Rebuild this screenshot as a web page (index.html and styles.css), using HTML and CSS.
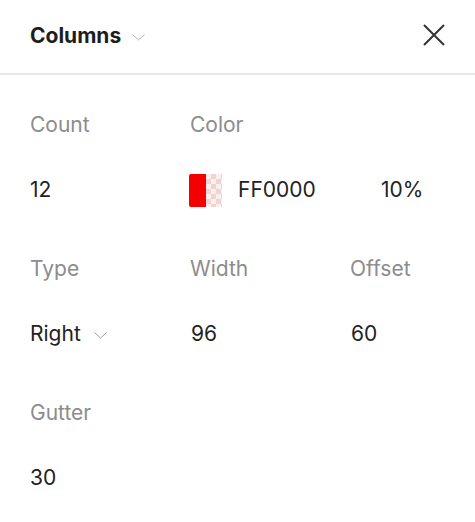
FILE: index.html
```html
<!DOCTYPE html>
<html>
<head>
<meta charset="utf-8">
<link rel="stylesheet" href="styles.css">
</head>
<body>
<div class="panel">
  <div class="header">
    <div class="title">Columns
      <svg class="chev" width="13" height="7" viewBox="0 0 13 7"><path d="M0.5 0.5 L6.5 6 L12.5 0.5" fill="none" stroke="#b0b0b0" stroke-width="1"/></svg>
    </div>
    <svg class="close" width="24" height="24" viewBox="0 0 24 24"><path d="M2 2 L22 22 M22 2 L2 22" stroke="#333" stroke-width="2" fill="none"/></svg>
  </div>
  <div class="body">
    <div class="section">
      <div class="label">Count</div>
      <div class="label span2">Color</div>
      <div class="value">12</div>
      <div class="value span2 color">
        <div class="swatch"><div class="solid"></div><div class="checker"></div></div>
        <span class="hex">FF0000</span>
        <span class="pct">10%</span>
      </div>
    </div>
    <div class="section">
      <div class="label">Type</div>
      <div class="label">Width</div>
      <div class="label">Offset</div>
      <div class="value">Right
        <svg class="chev2" width="13" height="7" viewBox="0 0 13 7"><path d="M0.5 0.5 L6.5 6 L12.5 0.5" fill="none" stroke="#a0a0a0" stroke-width="1"/></svg>
      </div>
      <div class="value v2">96</div>
      <div class="value v2">60</div>
    </div>
    <div class="section">
      <div class="label">Gutter</div>
      <div class="label"></div>
      <div class="label"></div>
      <div class="value">30</div>
    </div>
  </div>
</div>
</body>
</html>
```
FILE: styles.css
```css
html, body {
  margin: 0;
  padding: 0;
  background: #fff;
}
body {
  font-family: Inter, "Noto Sans", sans-serif;
  color: #222;
  width: 475px;
  overflow: hidden;
}
.header {
  height: 75px;
  box-sizing: border-box;
  padding: 24px 29px 0 30px;
  border-bottom: 2px solid #e8e8e8;
  display: flex;
  justify-content: space-between;
  align-items: flex-start;
}
.title {
  font-size: 21px;
  font-weight: 700;
  line-height: 24px;
  display: flex;
  align-items: center;
  gap: 11px;
  color: #1e1e1e;
}
.chev {
  margin-top: 2px;
}
.close {
  margin-top: -1px;
}
.body {
  padding: 38px 0 0 30px;
}
.section {
  display: grid;
  grid-template-columns: 160px 160px 1fr;
  grid-template-rows: 24px 24px;
  row-gap: 41px;
  margin-bottom: 55px;
}
.label {
  font-size: 21px;
  line-height: 24px;
  color: #8c8c8c;
}
.value {
  font-size: 21px;
  line-height: 24px;
  color: #222;
  display: flex;
  align-items: center;
}
.v2 {
  padding-left: 1px;
}
.span2 {
  grid-column: span 2;
}
.color {
  margin-left: -1px;
}
.swatch {
  width: 33px;
  height: 33px;
  display: flex;
  flex: none;
}
.solid {
  width: 17px;
  background: #f40000;
  border-radius: 2px 0 0 2px;
}
.checker {
  width: 16px;
  background-color: #fbeeee;
  background-image:
    linear-gradient(45deg, #f0d4d4 25%, transparent 25%, transparent 75%, #f0d4d4 75%),
    linear-gradient(45deg, #f0d4d4 25%, transparent 25%, transparent 75%, #f0d4d4 75%);
  background-size: 10px 10px;
  background-position: 0 0, 5px 5px;
}
.hex {
  margin-left: 16px;
  width: 143px;
}
.chev2 {
  margin-left: 13px;
  margin-top: 2px;
}
```
